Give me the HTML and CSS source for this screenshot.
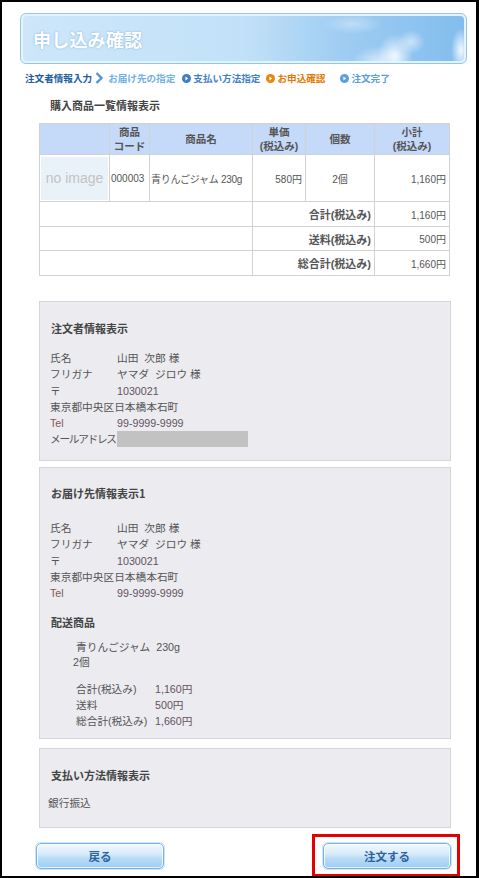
FILE: index.html
```html
<!DOCTYPE html>
<html lang="ja">
<head>
<meta charset="utf-8">
<title>申し込み確認</title>
<link rel="stylesheet" href="styles.css">
</head>
<body>
<div class="frame">
  <div class="banner">
    <div class="banner-inner"><h1>申し込み確認</h1></div>
  </div>

  <div class="steps">
    <span class="step step-done">注文者情報入力</span>
    <svg class="chev" width="8" height="12" viewBox="0 0 8 12"><path d="M1.5 1 L6.5 6 L1.5 11" fill="none" stroke="#4f97d6" stroke-width="2.4"/></svg>
    <span class="step step-light">お届け先の指定</span>
    <svg class="dot dot-pay" width="9" height="9" viewBox="0 0 9 9"><circle cx="4.5" cy="4.5" r="4.5" fill="#3f7fc4"/><path d="M3.4 2.6 L6.2 4.5 L3.4 6.4Z" fill="#fff"/></svg>
    <span class="step step-mid">支払い方法指定</span>
    <svg class="dot dot-cur" width="9" height="9" viewBox="0 0 9 9"><circle cx="4.5" cy="4.5" r="4.5" fill="#e9860c"/><path d="M3.4 2.6 L6.2 4.5 L3.4 6.4Z" fill="#fff"/></svg>
    <span class="step step-current">お申込確認</span>
    <svg class="dot dot-end" width="9" height="9" viewBox="0 0 9 9"><circle cx="4.5" cy="4.5" r="4.5" fill="#5a9fe0"/><path d="M3.4 2.6 L6.2 4.5 L3.4 6.4Z" fill="#fff"/></svg>
    <span class="step step-light2">注文完了</span>
  </div>

  <div class="list-title">購入商品一覧情報表示</div>

  <table class="items">
    <colgroup>
      <col class="c-img"><col class="c-code"><col class="c-name"><col class="c-price"><col class="c-qty"><col class="c-sub">
    </colgroup>
    <tr class="head">
      <th></th>
      <th>商品<br>コード</th>
      <th>商品名</th>
      <th>単価<br>(税込み)</th>
      <th>個数</th>
      <th>小計<br>(税込み)</th>
    </tr>
    <tr class="prod">
      <td class="img-cell"><div class="noimg">no image</div></td>
      <td class="code">000003</td>
      <td class="name">青りんごジャム 230g</td>
      <td class="r">580円</td>
      <td class="c">2個</td>
      <td class="r">1,160円</td>
    </tr>
    <tr class="sum s1">
      <td colspan="3"></td>
      <td colspan="2" class="lbl">合計(税込み)</td>
      <td class="r">1,160円</td>
    </tr>
    <tr class="sum s2">
      <td colspan="3"></td>
      <td colspan="2" class="lbl">送料(税込み)</td>
      <td class="r">500円</td>
    </tr>
    <tr class="sum s3">
      <td colspan="3"></td>
      <td colspan="2" class="lbl">総合計(税込み)</td>
      <td class="r">1,660円</td>
    </tr>
  </table>

  <section class="box order">
    <h2>注文者情報表示</h2>
    <div class="info">
      <span>氏名</span><span>山田&nbsp;&nbsp;次郎 様</span>
      <span>フリガナ</span><span>ヤマダ&nbsp;&nbsp;ジロウ 様</span>
      <span>〒</span><span class="num">1030021</span>
      <span class="full">東京都中央区日本橋本石町</span>
      <span class="tel">Tel</span><span class="num">99-9999-9999</span>
      <span class="tight">メールアドレス</span><span><span class="redact"></span></span>
    </div>
  </section>

  <section class="box delivery">
    <h2>お届け先情報表示1</h2>
    <div class="info">
      <span>氏名</span><span>山田&nbsp;&nbsp;次郎 様</span>
      <span>フリガナ</span><span>ヤマダ&nbsp;&nbsp;ジロウ 様</span>
      <span>〒</span><span class="num">1030021</span>
      <span class="full">東京都中央区日本橋本石町</span>
      <span class="tel">Tel</span><span class="num">99-9999-9999</span>
    </div>
    <h3>配送商品</h3>
    <div class="ship-item">
      <div class="ship-name">青りんごジャム&nbsp;&nbsp;230g</div>
      <div class="ship-qty">2個</div>
    </div>
    <div class="ship-totals">
      <span>合計(税込み)</span><span class="num">1,160円</span>
      <span>送料</span><span class="num">500円</span>
      <span>総合計(税込み)</span><span class="num">1,660円</span>
    </div>
  </section>

  <section class="box payment">
    <h2>支払い方法情報表示</h2>
    <p class="pay-method">銀行振込</p>
  </section>

  <div class="actions">
    <button class="btn btn-back" type="button">戻る</button>
    <div class="highlight">
      <button class="btn" type="button">注文する</button>
    </div>
  </div>
</div>
</body>
</html>
```

FILE: styles.css
```css
html, body {
  margin: 0;
  padding: 0;
  background: #fff;
}

.frame {
  width: 479px;
  height: 878px;
  box-sizing: border-box;
  border: 2px solid #000;
  border-right-width: 3px;
  background: #fff;
  overflow: hidden;
  font-family: "Liberation Sans", "Noto Sans CJK JP", sans-serif;
  color: #555;
}

/* ---------- banner ---------- */
.banner {
  margin: 11px 0 0 18px;
  width: 447px;
  height: 51px;
  box-sizing: border-box;
  border: 1px solid #8fc7f0;
  border-radius: 6px;
  padding: 2px;
  background: #e6f3fd;
}

.banner-inner {
  height: 100%;
  box-sizing: border-box;
  border-radius: 4px;
  display: flex;
  align-items: center;
  padding-left: 10px;
  background:
    radial-gradient(ellipse 18px 22px at 372px 40px, rgba(255,255,255,0.85), rgba(255,255,255,0) 100%),
    radial-gradient(ellipse 26px 16px at 355px 46px, rgba(255,255,255,0.6), rgba(255,255,255,0) 100%),
    radial-gradient(ellipse 14px 12px at 388px 26px, rgba(255,255,255,0.55), rgba(255,255,255,0) 100%),
    radial-gradient(ellipse 10px 22px at 438px 34px, rgba(255,255,255,0.9), rgba(255,255,255,0) 100%),
    radial-gradient(ellipse 30px 10px at 330px 8px, rgba(255,255,255,0.35), rgba(255,255,255,0) 100%),
    linear-gradient(to right, #cde6fa 0%, #c2e1f8 50%, #9fcdf2 72%, #82bdee 100%);
}

.banner h1 {
  margin: 0;
  font-family: "Noto Sans CJK JP", sans-serif;
  font-size: 18px;
  font-weight: bold;
  line-height: 22px;
  color: #fff;
  letter-spacing: 0.2px;
  text-shadow: 0 0 2px rgba(90, 150, 205, 0.7);
}

/* ---------- steps ---------- */
.steps {
  display: flex;
  align-items: center;
  height: 14px;
  margin-top: 7px;
  padding-left: 23px;
  font-family: "Noto Sans CJK JP", sans-serif;
  font-size: 9.6px;
  font-weight: bold;
  line-height: 14px;
  white-space: nowrap;
}

.step-done { color: #1d5e9f; }
.chev { margin-left: 3px; }
.step-light { color: #6fb0e6; margin-left: 5px; }
.dot-pay { margin-left: 7px; }
.step-mid { color: #3f7fc4; margin-left: 2px; }
.dot-cur { margin-left: 6px; }
.step-current { color: #e07a00; margin-left: 2px; }
.dot-end { margin-left: 15px; }
.step-light2 { color: #5a9fe0; margin-left: 2px; }

/* ---------- list title ---------- */
.list-title {
  margin: 13px 0 0 48px;
  font-family: "Noto Sans CJK JP", sans-serif;
  font-size: 11px;
  font-weight: bold;
  line-height: 14px;
  color: #444;
}

/* ---------- items table ---------- */
.items {
  margin: 11px 0 0 37px;
  width: 410px;
  border-collapse: collapse;
  table-layout: fixed;
  font-size: 10px;
  color: #555;
}

.c-img { width: 70px; }
.c-code { width: 40px; }
.c-name { width: 103px; }
.c-price { width: 53px; }
.c-qty { width: 69px; }
.c-sub { width: 75px; }

.items th,
.items td {
  border: 1px solid #d2d2d2;
  padding: 0 3px;
  white-space: nowrap;
  overflow: hidden;
}

.items th {
  background: #c5d9f9;
  font-weight: bold;
  font-size: 10.5px;
  line-height: 14px;
  color: #555;
  text-align: center;
  padding: 0;
}

.items .head { height: 31px; }
.items .prod { height: 47px; }
.items .s1 { height: 25px; }
.items .s2 { height: 24px; }
.items .s3 { height: 25px; }

.items td.img-cell { padding: 1px; }
.items td.code { padding: 0 1px; }
.items td.name { padding: 0 1px; letter-spacing: -0.3px; }

.noimg {
  height: 43px;
  background: #e9f1f9;
  color: #c3c3c3;
  font-size: 14px;
  line-height: 43px;
  text-align: center;
}

.items td.r { text-align: right; }
.items td.c { text-align: center; }

.items td.lbl {
  text-align: right;
  font-weight: bold;
  font-size: 11px;
  color: #555;
}

/* ---------- info boxes ---------- */
.box {
  margin: 25px 0 0 37px;
  width: 412px;
  box-sizing: border-box;
  background: #ebebf0;
  border: 1px solid #d6d6da;
  font-size: 10.7px;
}

.box h2,
.box h3 {
  margin: 0;
  font-family: "Noto Sans CJK JP", sans-serif;
  font-size: 11px;
  font-weight: bold;
  line-height: 18px;
  color: #444;
}

.info {
  display: grid;
  grid-template-columns: 67px auto;
  line-height: 16.3px;
  color: #555;
  white-space: nowrap;
}

.info .full { grid-column: 1 / -1; }
.info .num { color: #64525e; }
.info .tel { color: #8a5656; }
.info .tight { letter-spacing: -1.3px; }

.redact {
  display: inline-block;
  width: 131px;
  height: 16px;
  background: #c2c2c2;
  vertical-align: -4px;
}

.order {
  height: 160px;
  padding: 17px 10px 0 10px;
}
.order h2 { padding-left: 1px; }
.order .info { margin-top: 13px; }

.delivery {
  margin-top: 6px;
  height: 272px;
  padding: 16px 10px 0 10px;
}
.delivery h2 { padding-left: 1px; }
.delivery .info { margin-top: 18px; }
.delivery h3 { margin-top: 12px; padding-left: 1px; }

.ship-item {
  margin-top: 9px;
  line-height: 14.3px;
  color: #555;
}
.ship-name { padding-left: 26px; }
.ship-qty { padding-left: 23px; }

.ship-totals {
  display: grid;
  grid-template-columns: 79px auto;
  margin-top: 12px;
  padding-left: 26px;
  line-height: 16px;
  color: #555;
  white-space: nowrap;
}
.ship-totals .num { color: #64525e; }

.payment {
  margin-top: 9px;
  height: 80px;
  padding: 17px 10px 0 8px;
}
.payment h2 { padding-left: 3px; }

.pay-method {
  margin: 11px 0 0 0;
  line-height: 16px;
  color: #555;
}

/* ---------- actions ---------- */
.actions {
  display: flex;
  justify-content: space-between;
  align-items: flex-start;
  margin-top: 6px;
  padding: 0 16px 0 34px;
}

.btn {
  display: block;
  width: 128px;
  height: 26px;
  box-sizing: border-box;
  margin: 0;
  padding: 0;
  border: 1px solid #74b3e8;
  border-radius: 5px;
  box-shadow: 0 0 0 1px #cfe6f9, inset 0 0 0 1px rgba(255,255,255,0.75);
  background: linear-gradient(to bottom, #f1f8fe 0%, #d9ecfb 40%, #b9dcf6 60%, #9ccdf2 100%);
  font-family: "Noto Sans CJK JP", sans-serif;
  font-size: 11.5px;
  font-weight: bold;
  line-height: 22px;
  color: #2d62a3;
  text-align: center;
}

.btn-back { margin-top: 9px; }

.highlight {
  border: 3px solid #e60000;
  padding: 6px 6px 5px 8px;
}
```
